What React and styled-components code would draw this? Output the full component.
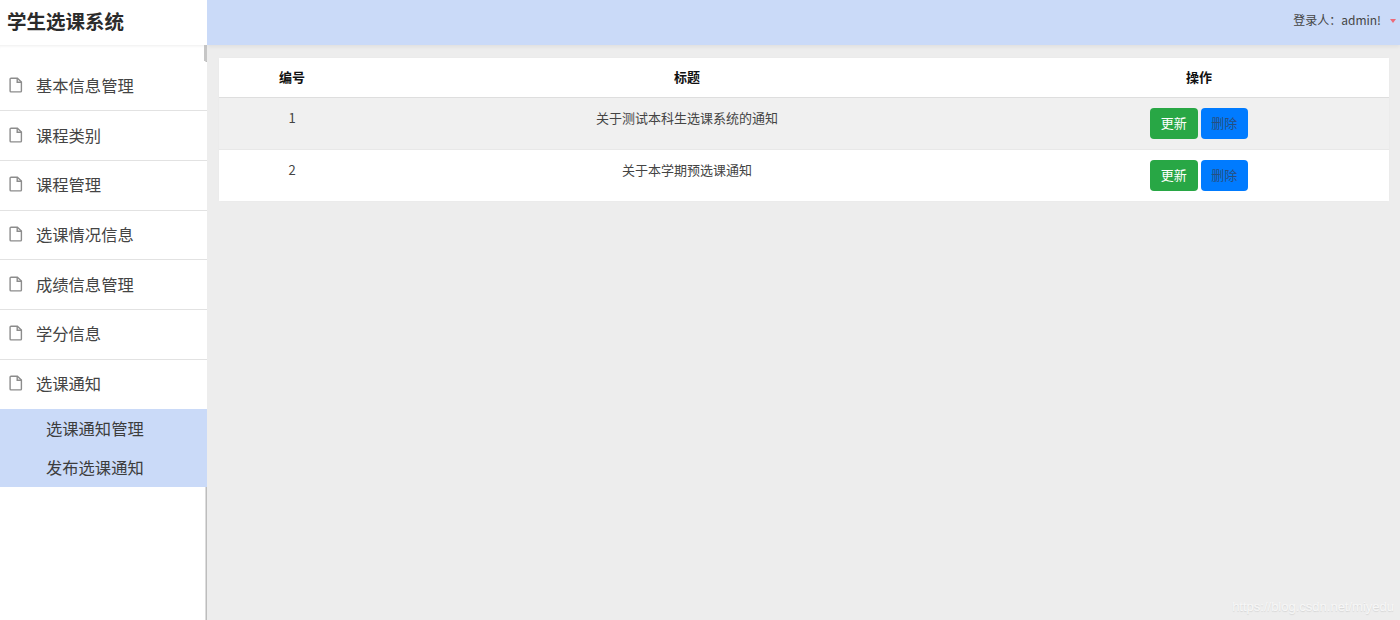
import React from "react";
import styled, { createGlobalStyle } from "styled-components";

const Global = createGlobalStyle`
  html, body { margin: 0; padding: 0; height: 100%; }
  body { background: #ededed; font-family: "Noto Sans CJK SC", "Liberation Sans", sans-serif; overflow: hidden; }
`;
const Page = styled.div`
  display: grid;
  grid-template-columns: 207px 1fr;
  grid-template-rows: 45px 1fr;
  width: 1400px;
  height: 620px;
`;
const Brand = styled.div`
  display: flex;
  align-items: center;
  padding: 0 0 4px 7px;
  background: #fff;
  font-size: 19.5px;
  font-weight: 700;
  color: #2b2b2b;
  position: relative;
  z-index: 2;
`;
const TopBar = styled.header`
  display: flex;
  align-items: center;
  justify-content: flex-end;
  gap: 9px;
  padding: 0 4px 6px 0;
  background: #cadaf8;
  box-shadow: 0 2px 4px rgba(0, 0, 0, 0.06);
  font-size: 12px;
  color: #444;
  position: relative;
  z-index: 1;
`;
const Caret = styled.span`
  width: 0;
  height: 0;
  margin-top: 2px;
  border-left: 3.5px solid transparent;
  border-right: 3.5px solid transparent;
  border-top: 4px solid #ee6a78;
`;
const Sidebar = styled.aside`
  position: relative;
  padding-top: 16.5px;
  background: #fff;
  border-right: 1px solid #bdbdbd;
  box-shadow: inset -1px 0 0 #dcdcdc, inset 0 3px 3px -2px rgba(0, 0, 0, 0.07);
`;
const Thumb = styled.span`
  position: absolute;
  top: 0;
  right: -1px;
  width: 3px;
  height: 16px;
  background: #c6c6c6;
`;
const Item = styled.div`
  display: flex;
  align-items: center;
  gap: 13px;
  height: 49.7px;
  box-sizing: border-box;
  margin-right: -1px;
  padding: 0 0 2px 9px;
  border-bottom: ${(p) => (p.$last ? "none" : "1px solid #e2e2e2")};
  font-size: 16.3px;
  color: #444;
  background: #fff;
`;
const Sub = styled.div`
  margin-right: -1px;
  background: #cadaf8;
`;
const SubItem = styled.div`
  display: flex;
  align-items: center;
  height: 39px;
  box-sizing: border-box;
  padding: 0 0 2px 46px;
  font-size: 16.3px;
  color: #3d3d3d;
`;
const Main = styled.main`
  padding: 13px 11px 0 12px;
`;
const Table = styled.div`
  width: 1170px;
  background: #fff;
  border-radius: 2px;
  box-shadow: 0 0 1px rgba(0, 0, 0, 0.08);
`;
const Row = styled.div`
  display: grid;
  grid-template-columns: 146px 644px 380px;
  height: ${(p) => (p.$head ? "39px" : "51px")};
  background: ${(p) => (p.$shade ? "#f0f0f0" : "#fff")};
  border-bottom: ${(p) => (p.$head ? "1px solid #dedede" : p.$shade ? "1px solid #e8e8e8" : "none")};
`;
const HeadCell = styled.div`
  display: flex;
  align-items: center;
  justify-content: center;
  padding-bottom: 3px;
  font-size: 13px;
  font-weight: 700;
  color: #111;
`;
const Cell = styled.div`
  padding-top: 10px;
  text-align: center;
  font-size: 13px;
  line-height: 19px;
  color: #444;
`;
const Actions = styled.div`
  display: flex;
  justify-content: center;
  gap: 3px;
  padding-top: 10px;
`;
const Btn = styled.button`
  width: 47.5px;
  height: 31px;
  padding: 0 0 2px;
  border: none;
  border-radius: 4px;
  background: ${(p) => (p.$primary ? "#007bff" : "#28a745")};
  color: ${(p) => (p.$primary ? "#274f7f" : "#fff")};
  font: inherit;
  font-size: 13px;
`;
const Watermark = styled.div`
  position: absolute;
  right: 6px;
  bottom: 6px;
  font-family: "Liberation Sans", sans-serif;
  font-size: 13px;
  color: #f7f7f7;
  text-shadow: 0 1px 1px rgba(0, 0, 0, 0.1);
`;
const FileIcon = () => (
  <svg width="14" height="16" viewBox="0 0 14 16" fill="none" stroke="#8c8c8c" strokeWidth="1.4">
    <path d="M2 1.2h6.4L12.4 5v9a.9.9 0 0 1-.9.9H2a.9.9 0 0 1-.9-.9V2.1A.9.9 0 0 1 2 1.2z" />
    <path d="M8.2 1.2V5.2h4.2" />
  </svg>
);

const menu = ["基本信息管理", "课程类别", "课程管理", "选课情况信息", "成绩信息管理", "学分信息", "选课通知"];
const rows = [
  { id: 1, title: "关于测试本科生选课系统的通知", shade: true },
  { id: 2, title: "关于本学期预选课通知", shade: false },
];

export default function App() {
  return (
    <>
      <Global />
      <Page>
        <Brand>学生选课系统</Brand>
        <TopBar>
          <span>登录人：admin!</span>
          <Caret />
        </TopBar>
        <Sidebar>
          <Thumb />
          {menu.map((m, i) => (
            <Item key={m} $last={i === menu.length - 1}>
              <FileIcon />
              {m}
            </Item>
          ))}
          <Sub>
            <SubItem>选课通知管理</SubItem>
            <SubItem>发布选课通知</SubItem>
          </Sub>
        </Sidebar>
        <Main>
          <Table>
            <Row $head>
              <HeadCell>编号</HeadCell>
              <HeadCell>标题</HeadCell>
              <HeadCell>操作</HeadCell>
            </Row>
            {rows.map((r) => (
              <Row key={r.id} $shade={r.shade}>
                <Cell>{r.id}</Cell>
                <Cell>{r.title}</Cell>
                <Actions>
                  <Btn>更新</Btn>
                  <Btn $primary>删除</Btn>
                </Actions>
              </Row>
            ))}
          </Table>
        </Main>
      </Page>
      <Watermark>https://blog.csdn.net/miyedu</Watermark>
    </>
  );
}
